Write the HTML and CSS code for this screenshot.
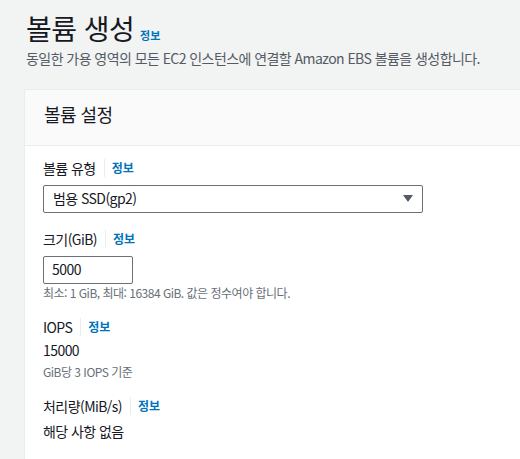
FILE: index.html
```html
<!DOCTYPE html>
<html lang="ko">
<head>
<meta charset="utf-8">
<link rel="stylesheet" href="styles.css">
</head>
<body>
<div class="page">
  <div class="page-head">
    <h1 class="title">볼륨 생성<a class="info">정보</a></h1>
    <p class="desc">동일한 가용 영역의 모든 EC2 인스턴스에 연결할 Amazon EBS 볼륨을 생성합니다.</p>
  </div>
  <div class="card">
    <div class="card-head">볼륨 설정</div>
    <div class="card-body">
      <div class="field">
        <div class="label">볼륨 유형<span class="sep"></span><a class="info">정보</a></div>
        <div class="select"><span>범용 SSD(gp2)</span>
          <svg class="caret" width="10" height="8" viewBox="0 0 10 8"><path d="M0 0H10L5 7Z" fill="#545b64"/></svg>
        </div>
      </div>
      <div class="field">
        <div class="label">크기(GiB)<span class="sep"></span><a class="info">정보</a></div>
        <div class="input">5000</div>
        <div class="hint">최소: 1 GiB, 최대: 16384 GiB. 값은 정수여야 합니다.</div>
      </div>
      <div class="field">
        <div class="label">IOPS<span class="sep"></span><a class="info">정보</a></div>
        <div class="value">15000</div>
        <div class="hint">GiB당 3 IOPS 기준</div>
      </div>
      <div class="field field-last">
        <div class="label">처리량(MiB/s)<span class="sep"></span><a class="info">정보</a></div>
        <div class="value value-last">해당 사항 없음</div>
      </div>
    </div>
  </div>
</div>
</body>
</html>
```

FILE: styles.css
```css
html, body {
  margin: 0;
  padding: 0;
  background: #f2f3f3;
  overflow: hidden;
}
body {
  font-family: "Noto Sans CJK KR", "Noto Sans", sans-serif;
  color: #16191f;
  width: 520px;
  height: 459px;
  letter-spacing: -0.035em;
}
.page {
  padding: 0 0 0 24px;
}
.page-head {
  padding-left: 2px;
}
.title {
  margin: 0;
  padding-top: 12px;
  font-size: 28px;
  font-weight: 400;
  line-height: 32px;
}
.info {
  color: #0073bb;
  font-size: 11px;
  font-weight: 700;
  letter-spacing: 0;
}
.title .info {
  margin-left: 6px;
  line-height: 1;
}
.desc {
  margin: 3px 0 0;
  font-size: 14px;
  line-height: 22px;
  color: #545b64;
}
.card {
  margin-top: 20px;
  width: 520px;
  min-height: 369px;
  background: #fff;
  border-left: 1px solid #eaeded;
  border-top: 1px solid #eaeded;
}
.card-head {
  background: #fafafa;
  border-bottom: 1px solid #eaeded;
  height: 48px;
  line-height: 48px;
  padding-bottom: 7px;
  padding-left: 19px;
  font-size: 18px;
}
.card-body {
  padding: 11px 0 0 18px;
}
.field {
  margin-bottom: 15px;
}
.field-last {
  margin-bottom: 0;
}
.label {
  font-size: 14px;
  line-height: 22px;
  display: flex;
  align-items: center;
}
.sep {
  width: 1px;
  height: 18px;
  background: #eaeded;
  margin: 0 7px 0 8px;
}
.label .info {
  font-size: 12px;
}
.select {
  margin-top: 6px;
  width: 380px;
  height: 28px;
  box-sizing: border-box;
  border: 1px solid #687078;
  border-radius: 2px;
  padding: 0 9px 3px 9px;
  font-size: 14px;
  line-height: 22px;
  display: flex;
  justify-content: space-between;
  align-items: center;
}
.caret {
  margin-top: 3px;
}
.input {
  margin-top: 6px;
  width: 90px;
  height: 28px;
  box-sizing: border-box;
  border: 1px solid #687078;
  border-radius: 2px;
  padding: 0 8px;
  font-size: 14px;
  line-height: 25px;
}
.hint {
  font-size: 12px;
  line-height: 16px;
  color: #687078;
  margin-top: 1px;
  letter-spacing: -0.5px;
}
.value + .hint {
  margin-top: 3px;
}
.value {
  font-size: 14px;
  line-height: 22px;
  margin-top: 1px;
}
.value-last {
  margin-top: 3px;
}
```
